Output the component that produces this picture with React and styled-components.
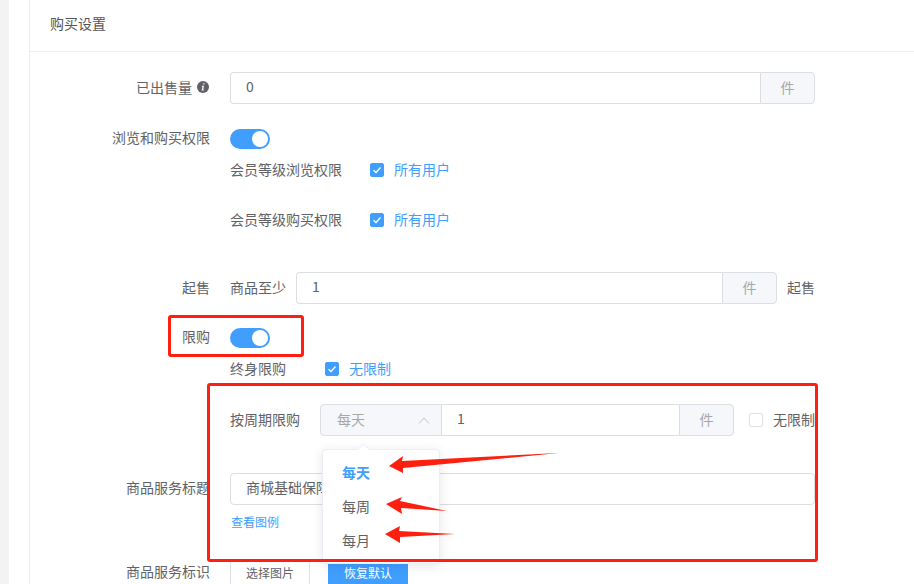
import React from 'react';
import styled, { createGlobalStyle } from 'styled-components';

const GlobalStyle = createGlobalStyle`
   html, body {
      margin: 0;
      padding: 0;
      height: 100%;
      background: #fff;
      overflow: hidden;
   }
   body {
      font-family: "Noto Sans CJK SC", "Liberation Sans", sans-serif;
      font-size: 14px;
      color: #606266;
   }
`;

const Check = () => (
   <svg width="10" height="10" viewBox="0 0 10 10" fill="none">
      <path d="M1.5 5.2 L4 7.5 L8.5 2.5" stroke="#fff" strokeWidth="1.3" />
   </svg>
);

const InfoIcon = () => (
   <InfoGlyph width="12" height="12" viewBox="0 0 12 12">
      <circle cx="6" cy="6" r="6" fill="#606266" />
      <path d="M6.3 2.2 h1.2 v1.3 h-1.2 z M5 4.8 h2 l-0.8 3.7 h0.7 l-0.2 0.9 h-2 l0.8 -3.7 h-0.7 z" fill="#fff" />
   </InfoGlyph>
);

const Chevron = () => (
   <svg width="12" height="7" viewBox="0 0 12 7" fill="none">
      <path d="M1 6.5 L6 1 L11 6.5" stroke="#c0c4cc" strokeWidth="1" />
   </svg>
);

const Options = ['每天', '每周', '每月'];

const App = () => {
   return (
      <Page>
         <GlobalStyle />
         <Gutter />
         <Panel>
            <PanelHeader>购买设置</PanelHeader>
            <PanelBody>
               <FormRow $top={20}>
                  <Label>已出售量 <InfoIcon /></Label>
                  <Control>
                     <InputGroup>
                        <Input>0</Input>
                        <Addon>件</Addon>
                     </InputGroup>
                  </Control>
               </FormRow>

               <FormRow $top={25} $align="flex-start">
                  <Label>浏览和购买权限</Label>
                  <Control>
                     <Switch />
                     <SubRow $top={11}>
                        <SubLabel $width={140}>会员等级浏览权限</SubLabel>
                        <Checkbox $checked><Check /></Checkbox>
                        <CheckText $active>所有用户</CheckText>
                     </SubRow>
                     <SubRow $top={30}>
                        <SubLabel $width={140}>会员等级购买权限</SubLabel>
                        <Checkbox $checked><Check /></Checkbox>
                        <CheckText $active>所有用户</CheckText>
                     </SubRow>
                  </Control>
               </FormRow>

               <FormRow $top={42}>
                  <Label>起售</Label>
                  <Control $row>
                     <SubLabel $width={66}>商品至少</SubLabel>
                     <InputGroup>
                        <Input>1</Input>
                        <Addon>件</Addon>
                     </InputGroup>
                     <Suffix>起售</Suffix>
                  </Control>
               </FormRow>

               <FormRow $top={24} $align="flex-start">
                  <Label>限购</Label>
                  <Control>
                     <Switch />
                     <SubRow $top={11}>
                        <SubLabel $width={95}>终身限购</SubLabel>
                        <Checkbox $checked><Check /></Checkbox>
                        <CheckText $active>无限制</CheckText>
                     </SubRow>
                     <SubRow $top={25}>
                        <SubLabel $width={90}>按周期限购</SubLabel>
                        <InputGroup>
                           <SelectBox>
                              <SelectText>每天</SelectText>
                              <Chevron />
                              <Dropdown>
                                 {Options.map((item, i) => (
                                    <DropdownItem key={item} $active={i === 0}>{item}</DropdownItem>
                                 ))}
                              </Dropdown>
                           </SelectBox>
                           <Input $joined>1</Input>
                           <Addon>件</Addon>
                        </InputGroup>
                        <Checkbox $gap={15} />
                        <CheckText>无限制</CheckText>
                     </SubRow>
                  </Control>
               </FormRow>

               <FormRow $top={37} $align="flex-start">
                  <Label $pad={4}>商品服务标题</Label>
                  <Control>
                     <InputGroup>
                        <Input>商城基础保障</Input>
                     </InputGroup>
                     <LinkText>查看图例</LinkText>
                  </Control>
               </FormRow>

               <FormRow $top={27} $align="flex-start">
                  <Label $pad={2}>商品服务标识</Label>
                  <Control $row>
                     <OutlineButton>选择图片</OutlineButton>
                     <PrimaryButton>恢复默认</PrimaryButton>
                  </Control>
               </FormRow>
            </PanelBody>
         </Panel>

         <Highlight $left={168} $top={315} $width={136} $height={42} />
         <Highlight $left={207} $top={383} $width={611} $height={179} />
         <ArrowLayer width="914" height="584" viewBox="0 0 914 584">
            <polygon points="389,466 403,456 402,461 559,453 403,468 403,473" />
            <polygon points="386,504 402,497 400,501 447,511 401,508 402,514" />
            <polygon points="385,534 400,526 399,531 455,534 400,537 400,543" />
         </ArrowLayer>
      </Page>
   );
};
export default App;

const Page = styled.div`
   position: relative;
   display: flex;
   width: 914px;
   height: 584px;
   overflow: hidden;
   background: #fff;
`;

const Gutter = styled.div`
   flex: 0 0 9px;
   margin-right: 20px;
   background: #f3f3f3;
`;

const Panel = styled.div`
   flex: 1;
   border-left: 1px solid #ebeef5;
`;

const PanelHeader = styled.div`
   height: 51px;
   line-height: 46px;
   padding-left: 20px;
   border-bottom: 1px solid #ebeef5;
   color: #555;
`;

const PanelBody = styled.div`
   width: 785px;
`;

const FormRow = styled.div`
   display: flex;
   align-items: ${(props) => props.$align || 'center'};
   margin-top: ${(props) => props.$top}px;
`;

const Label = styled.div`
   flex: 0 0 200px;
   display: flex;
   justify-content: flex-end;
   align-items: center;
   gap: 5px;
   height: 20px;
   margin-top: ${(props) => props.$pad || -2}px;
   padding-right: 20px;
   box-sizing: border-box;
   line-height: 20px;
   white-space: nowrap;
   color: #606266;
`;

const InfoGlyph = styled.svg`
   margin-right: 1px;
`;

const Control = styled.div`
   flex: 0 0 585px;
   display: flex;
   flex-direction: ${(props) => (props.$row ? 'row' : 'column')};
   align-items: ${(props) => (props.$row ? 'center' : 'stretch')};
`;

const InputGroup = styled.div`
   flex: 1 1 auto;
   display: flex;
   height: 32px;
`;

const Input = styled.div`
   flex: 1;
   padding-left: 15px;
   line-height: 27px;
   border: 1px solid #dcdee2;
   border-right: 0;
   border-radius: ${(props) => (props.$joined ? '0' : '4px 0 0 4px')};
   border-left: ${(props) => (props.$joined ? '0' : '1px solid #dcdee2')};
   white-space: nowrap;
   color: #606266;

   &:last-child {
      border-right: 1px solid #dcdee2;
      border-radius: 4px;
   }
`;

const Addon = styled.div`
   flex: 0 0 55px;
   box-sizing: border-box;
   text-align: center;
   line-height: 28px;
   color: #a5a7ab;
   background: #f5f7fa;
   border: 1px solid #dcdee2;
   border-radius: 0 4px 4px 0;
`;

const SelectBox = styled.div`
   position: relative;
   flex: 0 0 122px;
   box-sizing: border-box;
   display: flex;
   justify-content: space-between;
   align-items: center;
   padding: 0 11px 0 16px;
   background: #f5f7fa;
   border: 1px solid #dcdee2;
   border-radius: 4px 0 0 4px;
`;

const SelectText = styled.span`
   line-height: 18px;
   padding-bottom: 2px;
   color: #a5a7ab;
`;

const Dropdown = styled.div`
   position: absolute;
   top: 44px;
   left: 1px;
   z-index: 2;
   width: 118px;
   height: 115px;
   box-sizing: border-box;
   padding-top: 5px;
   background: #fff;
   border-radius: 4px;
   border: 1px solid #ebeef5;
   box-shadow: 0 2px 12px rgba(0, 0, 0, 0.1);

   &::before {
      content: '';
      position: absolute;
      top: -5px;
      left: 36px;
      width: 8px;
      height: 8px;
      background: #fff;
      border-top: 1px solid #ebeef5;
      border-left: 1px solid #ebeef5;
      transform: rotate(45deg);
   }
`;

const DropdownItem = styled.div`
   height: 34px;
   line-height: 34px;
   padding-left: 19px;
   font-weight: ${(props) => (props.$active ? 700 : 400)};
   color: ${(props) => (props.$active ? '#409eff' : '#606266')};
`;

const Switch = styled.div`
   position: relative;
   width: 40px;
   height: 20px;
   border-radius: 10px;
   background: #409eff;

   &::after {
      content: '';
      position: absolute;
      top: 2px;
      right: 2px;
      width: 16px;
      height: 16px;
      border-radius: 50%;
      background: #fff;
   }
`;

const SubRow = styled.div`
   display: flex;
   align-items: center;
   min-height: 20px;
   margin-top: ${(props) => props.$top}px;
`;

const SubLabel = styled.div`
   flex: 0 0 ${(props) => props.$width}px;
   white-space: nowrap;
   line-height: 18px;
   padding-bottom: 2px;
`;

const Checkbox = styled.div`
   flex: 0 0 14px;
   height: 14px;
   box-sizing: border-box;
   display: flex;
   align-items: center;
   justify-content: center;
   margin-left: ${(props) => props.$gap || 0}px;
   border-radius: 2px;
   background: ${(props) => (props.$checked ? '#409eff' : '#fff')};
   border: 1px solid ${(props) => (props.$checked ? '#409eff' : '#dcdfe6')};
`;

const CheckText = styled.span`
   margin-left: 10px;
   white-space: nowrap;
   line-height: 18px;
   padding-bottom: 2px;
   color: ${(props) => (props.$active ? '#409eff' : '#606266')};
`;

const Suffix = styled.span`
   margin-left: 10px;
   white-space: nowrap;
   line-height: 18px;
   padding-bottom: 2px;
`;

const LinkText = styled.a`
   margin-top: 7px;
   padding-left: 1px;
   font-size: 12px;
   line-height: 20px;
   color: #409eff;
`;

const OutlineButton = styled.div`
   box-sizing: border-box;
   width: 80px;
   height: 28px;
   line-height: 26px;
   font-size: 12px;
   text-align: center;
   border: 1px solid #dcdfe6;
`;

const PrimaryButton = styled(OutlineButton)`
   margin-left: 18px;
   color: #fff;
   background: #409eff;
   border-color: #409eff;
`;

const Highlight = styled.div`
   position: absolute;
   z-index: 3;
   left: ${(props) => props.$left}px;
   top: ${(props) => props.$top}px;
   width: ${(props) => props.$width}px;
   height: ${(props) => props.$height}px;
   box-sizing: border-box;
   border: 3px solid #ff1f10;
   border-radius: 3px;
`;

const ArrowLayer = styled.svg`
   position: absolute;
   z-index: 4;
   left: 0;
   top: 0;
   fill: #ff1f10;
`;
